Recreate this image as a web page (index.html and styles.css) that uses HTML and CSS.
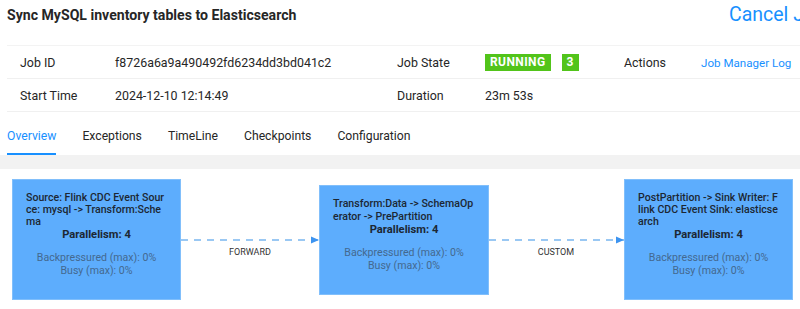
FILE: index.html
```html
<!DOCTYPE html>
<html lang="en">
<head>
    <meta charset="UTF-8">
    <meta name="viewport" content="width=device-width, initial-scale=1.0">
    <title>Job Overview</title>
    <link rel="stylesheet" href="styles.css">
</head>
<body>
    <div class="page-header">
        <div class="page-title">Sync MySQL inventory tables to Elasticsearch</div>
        <div class="cancel-wrap"><a class="cancel-link">Cancel Job</a></div>
    </div>

    <div class="job-info">
        <div class="info-row">
            <div class="info-label">Job ID</div>
            <div class="info-value">f8726a6a9a490492fd6234dd3bd041c2</div>
            <div class="info-label">Job State</div>
            <div class="info-value">
                <span class="badge">RUNNING</span>
                <span class="badge badge-count">3</span>
            </div>
            <div class="info-label">Actions</div>
            <div class="info-value"><a class="link">Job Manager Log</a></div>
        </div>
        <div class="info-row">
            <div class="info-label">Start Time</div>
            <div class="info-value">2024-12-10 12:14:49</div>
            <div class="info-label">Duration</div>
            <div class="info-value">23m 53s</div>
            <div class="info-label"></div>
            <div class="info-value"></div>
        </div>
    </div>

    <div class="tabs">
        <div class="tab tab-active">Overview</div>
        <div class="tab">Exceptions</div>
        <div class="tab">TimeLine</div>
        <div class="tab">Checkpoints</div>
        <div class="tab">Configuration</div>
    </div>

    <div class="tab-gap"></div>

    <div class="graph">
        <svg class="edges" width="800" height="142">
            <defs>
                <marker id="arrow" markerWidth="8" markerHeight="8" refX="8" refY="4" orient="auto" markerUnits="userSpaceOnUse">
                    <path d="M0,0.5 L8,4 L0,7.5 Z" fill="#3d94f0"></path>
                </marker>
            </defs>
            <line x1="181" y1="71" x2="319" y2="71" class="edge-line" marker-end="url(#arrow)"></line>
            <line x1="489" y1="71" x2="624" y2="71" class="edge-line" marker-end="url(#arrow)"></line>
            <text x="250" y="86" class="edge-label">FORWARD</text>
            <text x="556" y="86" class="edge-label">CUSTOM</text>
        </svg>

        <div class="node node-tall" style="left: 12px; top: 10px;">
            <div class="node-title">Source: Flink CDC Event Source: mysql -&gt; Transform:Schema</div>
            <div class="node-parallel">Parallelism: 4</div>
            <div class="node-stats">Backpressured (max): 0%<br>Busy (max): 0%</div>
        </div>

        <div class="node node-short" style="left: 319px; top: 16px;">
            <div class="node-title">Transform:Data -&gt; SchemaOperator -&gt; PrePartition</div>
            <div class="node-parallel">Parallelism: 4</div>
            <div class="node-stats">Backpressured (max): 0%<br>Busy (max): 0%</div>
        </div>

        <div class="node node-tall" style="left: 624px; top: 10px;">
            <div class="node-title">PostPartition -&gt; Sink Writer: Flink CDC Event Sink: elasticsearch</div>
            <div class="node-parallel">Parallelism: 4</div>
            <div class="node-stats">Backpressured (max): 0%<br>Busy (max): 0%</div>
        </div>
    </div>
</body>
</html>
```

FILE: styles.css
```css
body {
    margin: 0;
    padding: 0;
    width: 800px;
    height: 309px;
    overflow: hidden;
    background-color: #ffffff;
    color: rgba(0, 0, 0, 0.85);
    font-family: Roboto, "Liberation Sans", sans-serif;
    font-size: 12.4px;
}
.page-header {
    display: flex;
    align-items: center;
    height: 29px;
    padding-left: 7px;
}
.page-title {
    flex: 1;
    font-size: 14.1px;
    font-weight: 700;
    color: #262626;
}
.cancel-wrap {
    width: 71px;
    overflow: hidden;
    white-space: nowrap;
}
.cancel-link {
    font-size: 19.5px;
    color: #1890ff;
}
.job-info {
    margin-top: 16px;
    margin-left: 7px;
    border-top: 1px solid #f3f3f3;
}
.info-row {
    display: grid;
    grid-template-columns: 96px 281px 89px 138px 78px 111px;
    align-items: center;
    height: 32px;
    border-bottom: 1px solid #f0f0f0;
}
.info-label {
    padding-left: 13px;
    color: #262626;
}
.info-value {
    padding-left: 12px;
    color: #262626;
    white-space: nowrap;
}
.badge {
    display: inline-block;
    background-color: #52c41a;
    color: #ffffff;
    font-weight: 700;
    font-size: 12px;
    line-height: 17px;
    padding: 0 5px;
    letter-spacing: 0.4px;
}
.badge-count {
    margin-left: 8px;
}
.link {
    font-size: 11.6px;
    color: #1890ff;
}
.tabs {
    display: flex;
    align-items: flex-end;
    height: 43px;
    padding-left: 7px;
    gap: 26px;
}
.tab {
    padding-bottom: 10px;
    border-bottom: 2px solid transparent;
    font-size: 12.2px;
    color: #262626;
}
.tab-active {
    color: #1890ff;
    border-bottom-color: #1890ff;
}
.tab-gap {
    height: 14px;
    background-color: #f2f2f2;
}
.graph {
    position: relative;
    height: 142px;
    overflow: hidden;
}
.edges {
    position: absolute;
    left: 0;
    top: 0;
}
.edge-line {
    stroke: #7ab6f0;
    stroke-width: 1.3;
    stroke-dasharray: 7 6;
}
.edge-label {
    font-family: Roboto, "Liberation Sans", sans-serif;
    font-size: 9px;
    fill: #333333;
    text-anchor: middle;
}
.node {
    position: absolute;
    box-sizing: border-box;
    width: 169px;
    display: flex;
    flex-direction: column;
    justify-content: center;
    padding: 0 13px 10px;
    background-color: #5dadfd;
    border: 1px solid #81bffb;
}
.node-tall {
    height: 121px;
}
.node-short {
    height: 110px;
    width: 170px;
}
.node-title {
    font-size: 10.6px;
    line-height: 12.3px;
    font-weight: 500;
    color: #1c2733;
    word-break: break-all;
}
.node-parallel {
    font-size: 11.2px;
    line-height: 14px;
    font-weight: 700;
    color: #1c2733;
    text-align: center;
}
.node-stats {
    margin-top: 9px;
    font-size: 10.6px;
    line-height: 13px;
    color: #44698f;
    text-align: center;
}
```
